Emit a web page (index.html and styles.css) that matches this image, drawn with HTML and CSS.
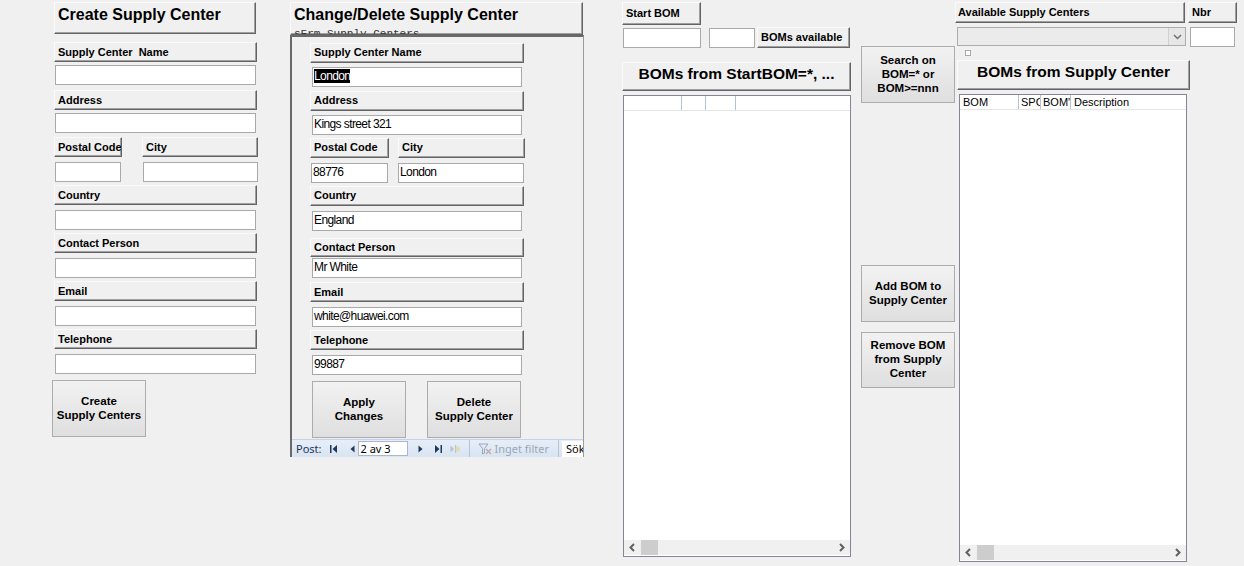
FILE: index.html
```html
<!DOCTYPE html>
<html>
<head>
<meta charset="utf-8">
<link rel="stylesheet" href="styles.css">
</head>
<body>
<div class="page">

  <!-- Column 1: create -->
  <div class="col1">
    <div class="raised title">Create Supply Center</div>
    <div class="raised lbl c1w mt8">Supply Center&nbsp; Name</div>
    <div class="inp c1i mt3"></div>
    <div class="raised lbl c1w mt5">Address</div>
    <div class="inp c1i mt3"></div>
    <div class="pair mt4">
      <div class="raised lbl postal1">Postal Code</div>
      <div class="raised lbl city1">City</div>
    </div>
    <div class="pair mt5">
      <div class="inp postal1i"></div>
      <div class="inp city1i"></div>
    </div>
    <div class="raised lbl c1w mt3">Country</div>
    <div class="inp c1i mt5"></div>
    <div class="raised lbl c1w mt3">Contact Person</div>
    <div class="inp c1i mt5"></div>
    <div class="raised lbl c1w mt3">Email</div>
    <div class="inp c1i mt5"></div>
    <div class="raised lbl c1w mt3">Telephone</div>
    <div class="inp c1i mt5"></div>
    <button class="btn create mt6">Create<br>Supply Centers</button>
  </div>

  <!-- Column 2: change/delete -->
  <div class="col2">
    <div class="raised title title2">Change/Delete Supply Center<span class="sfrm">sFrm Supply Centers</span></div>
    <div class="subform">
      <div class="raised lbl c2w">Supply Center Name</div>
      <div class="inp c2i mt4"><span class="sel">London</span></div>
      <div class="raised lbl c2w mt4">Address</div>
      <div class="inp c2i mt4">Kings street 321</div>
      <div class="pair mt3">
        <div class="raised lbl postal2">Postal Code</div>
        <div class="raised lbl city2">City</div>
      </div>
      <div class="pair mt5">
        <div class="inp postal2i">88776</div>
        <div class="inp city2i">London</div>
      </div>
      <div class="raised lbl c2w mt3">Country</div>
      <div class="inp c2i mt5">England</div>
      <div class="raised lbl c2w mt7">Contact Person</div>
      <div class="inp c2i mt1">Mr White</div>
      <div class="raised lbl c2w mt4">Email</div>
      <div class="inp c2i mt5">white@huawei.com</div>
      <div class="raised lbl c2w mt3">Telephone</div>
      <div class="inp c2i mt5">99887</div>
      <div class="pair mt6 btnrow">
        <button class="btn apply">Apply<br>Changes</button>
        <button class="btn delete">Delete<br>Supply Center</button>
      </div>
      <div class="navbar">
        <span class="navlbl">Post:</span>
        <svg class="ico first" width="8" height="8" viewBox="0 0 8 8"><rect x="0" y="0" width="1.5" height="8" fill="#1e395b"/><path d="M7 0 L2.5 4 L7 8 Z" fill="#1e395b"/></svg>
        <svg class="ico prev" width="5" height="8" viewBox="0 0 5 8"><path d="M4.5 0.5 L0.5 4 L4.5 7.5 Z" fill="#1e395b"/></svg>
        <span class="recbox">2 av 3</span>
        <svg class="ico next" width="5" height="8" viewBox="0 0 5 8"><path d="M0.5 0.5 L4.5 4 L0.5 7.5 Z" fill="#1e395b"/></svg>
        <svg class="ico last" width="8" height="8" viewBox="0 0 8 8"><path d="M1 0 L5.5 4 L1 8 Z" fill="#1e395b"/><rect x="6.5" y="0" width="1.5" height="8" fill="#1e395b"/></svg>
        <svg class="ico newrec" width="10" height="8" viewBox="0 0 10 8"><path d="M0.5 0.5 L4 4 L0.5 7.5 Z" fill="#b8c4d4"/><rect x="5" y="0" width="1.2" height="8" fill="#b8c4d4"/><path d="M8 1 L8 7 M5.5 4 L10 4 M6.3 2 L9.7 6 M9.7 2 L6.3 6" stroke="#e8d89a" stroke-width="1"/></svg>
        <span class="navsep"></span>
        <svg class="ico filter" width="14" height="12" viewBox="0 0 14 12"><path d="M1 1 L10 1 L6.5 5.5 L6.5 10 L4.5 11 L4.5 5.5 Z" fill="none" stroke="#9aa7b8" stroke-width="1"/><path d="M8 6 L13 11 M13 6 L8 11" stroke="#b9a9a9" stroke-width="1.2"/></svg>
        <span class="nofilter">Inget filter</span>
        <span class="navsep"></span>
        <span class="search">Sök</span>
      </div>
    </div>
  </div>

  <!-- Column 3: BOM list -->
  <div class="col3">
    <div class="raised lbl startbom">Start BOM</div>
    <div class="pair boms-row">
      <div class="inp bomin1"></div>
      <div class="inp bomin2"></div>
      <div class="raised lbl avail">BOMs available</div>
    </div>
    <div class="raised bigtitle bt1">BOMs from StartBOM=*, ...</div>
    <div class="list list1">
      <div class="lhead">
        <span class="hc hc1"></span><span class="hc hc2"></span><span class="hc hc3"></span><span class="hc hcrest"></span>
      </div>
      <div class="lbody"></div>
      <div class="hscroll">
        <svg class="arrow" width="17" height="15" viewBox="0 0 17 15"><path d="M10 4 L6.5 7.5 L10 11" fill="none" stroke="#606060" stroke-width="2"/></svg>
        <span class="thumb"></span>
        <span class="track"></span>
        <svg class="arrow" width="17" height="15" viewBox="0 0 17 15"><path d="M7 4 L10.5 7.5 L7 11" fill="none" stroke="#606060" stroke-width="2"/></svg>
      </div>
    </div>
  </div>

  <!-- Column 4: action buttons -->
  <div class="col4">
    <button class="btn side search-btn">Search on<br>BOM=* or<br>BOM&gt;=nnn</button>
    <button class="btn side add-btn">Add BOM to<br>Supply Center</button>
    <button class="btn side rem-btn">Remove BOM<br>from Supply<br>Center</button>
  </div>

  <!-- Column 5: supply center BOMs -->
  <div class="col5">
    <div class="pair">
      <div class="raised lbl availsc">Available Supply Centers</div>
      <div class="raised lbl nbr">Nbr</div>
    </div>
    <div class="pair combo-row">
      <div class="combo">
        <span class="combotext"></span>
        <span class="dropbtn"><svg width="9" height="6" viewBox="0 0 9 6"><path d="M1 1 L4.5 4.5 L8 1" fill="none" stroke="#707070" stroke-width="1.5"/></svg></span>
      </div>
      <div class="inp nbrin"></div>
    </div>
    <span class="chk"></span>
    <div class="raised bigtitle bt2">BOMs from Supply Center</div>
    <div class="list list2">
      <div class="lhead">
        <span class="hc hcb1">BOM</span><span class="hc hcb2">SPC</span><span class="hc hcb3">BOM'</span><span class="hc hcrest">Description</span>
      </div>
      <div class="lbody"></div>
      <div class="hscroll">
        <svg class="arrow" width="17" height="15" viewBox="0 0 17 15"><path d="M10 4 L6.5 7.5 L10 11" fill="none" stroke="#606060" stroke-width="2"/></svg>
        <span class="thumb"></span>
        <span class="track"></span>
        <svg class="arrow" width="17" height="15" viewBox="0 0 17 15"><path d="M7 4 L10.5 7.5 L7 11" fill="none" stroke="#606060" stroke-width="2"/></svg>
      </div>
    </div>
  </div>

</div>
</body>
</html>
```

FILE: styles.css
```css
* { box-sizing: border-box; }

body {
  margin: 0;
  width: 1244px;
  height: 566px;
  overflow: hidden;
  background: #f0f0f0;
  font-family: "Liberation Sans", Arial, sans-serif;
  color: #000;
}

.page {
  display: flex;
  align-items: flex-start;
}

.pair { display: flex; align-items: flex-start; }

/* spacing helpers */
.mt1 { margin-top: 1px; }
.mt3 { margin-top: 3px; }
.mt4 { margin-top: 4px; }
.mt5 { margin-top: 5px; }
.mt6 { margin-top: 6px; }
.mt7 { margin-top: 7px; }
.mt8 { margin-top: 8px; }

/* raised Access-style label / button */
.raised {
  background: #f0f0f0;
  border: 1px solid;
  border-color: #fafafa #646464 #646464 #fafafa;
  box-shadow: inset -1px -1px 0 #a0a0a0;
  white-space: nowrap;
  overflow: hidden;
}

.lbl {
  height: 20px;
  display: flex;
  align-items: center;
  padding-left: 3px;
  padding-bottom: 1px;
  font-size: 11px;
  font-weight: bold;
}

.title {
  height: 32px;
  margin-top: 2px;
  padding: 3px 0 0 3px;
  font-size: 16px;
  font-weight: bold;
}

.bigtitle {
  display: flex;
  align-items: center;
  justify-content: center;
  padding-bottom: 6px;
  font-size: 15.5px;
  font-weight: bold;
}

/* inputs */
.inp {
  height: 20px;
  background: #fff;
  border: 1px solid #a9a9a9;
  font-size: 12px;
  letter-spacing: -0.6px;
  line-height: 17px;
  padding-left: 1px;
  white-space: nowrap;
  overflow: hidden;
}

.sel {
  background: #000;
  color: #fff;
}

/* flat Win7 buttons */
.btn {
  display: block;
  border: 1px solid #acacac;
  background: linear-gradient(#f2f2f2, #e8e8e8 50%, #dfdfdf);
  font-family: "Liberation Sans", Arial, sans-serif;
  font-size: 11.5px;
  font-weight: bold;
  line-height: 14px;
  color: #000;
  text-align: center;
  padding: 0 0 2px;
}

/* ---------- column 1 ---------- */
.col1 {
  margin-left: 52px;
  width: 206px;
  display: flex;
  flex-direction: column;
  align-items: flex-start;
}
.col1 .title { margin-left: 2px; width: 202px; }
.c1w { margin-left: 2px; width: 203px; }
.c1i { margin-left: 3px; width: 201px; }
.postal1 { margin-left: 2px; width: 68px; }
.city1 { margin-left: 20px; width: 116px; }
.postal1i { margin-left: 3px; width: 66px; }
.city1i { margin-left: 22px; width: 115px; }
.create { width: 94px; height: 57px; }

/* ---------- column 2 ---------- */
.col2 {
  margin-left: 32px;
  width: 295px;
  display: flex;
  flex-direction: column;
}
.title2 {
  position: relative;
  width: 293px;
  height: 33px;
}
.sfrm {
  position: absolute;
  left: 3px;
  top: 25px;
  font-family: "Liberation Mono", "Courier New", monospace;
  font-weight: normal;
  font-size: 11px;
  color: #333;
}
.subform {
  width: 294px;
  height: 422px;
  border-left: 2px solid #696969;
  border-top: 2px solid #696969;
  border-right: 1px solid #9a9a9a;
  padding: 6px 0 0 18px;
  display: flex;
  flex-direction: column;
  align-items: flex-start;
  overflow: hidden;
}
.c2w { width: 214px; }
.c2i { margin-left: 2px; width: 210px; }
.postal2 { width: 79px; }
.city2 { margin-left: 9px; width: 127px; }
.postal2i { margin-left: 1px; width: 77px; }
.city2i { margin-left: 10px; width: 126px; }
.btnrow { gap: 21px; margin-left: 2px; }
.apply, .delete { width: 94px; height: 57px; }

.navbar {
  margin: 1px 0 0 -18px;
  width: 300px;
  height: 18px;
  background: linear-gradient(#e6eef8, #d9e4f2);
  border-top: 1px solid #c5d3e6;
  display: flex;
  align-items: center;
  font-family: "Noto Sans", "Open Sans", sans-serif;
  font-size: 11px;
  color: #1e395b;
  white-space: nowrap;
}
.navlbl { margin-left: 4px; }
.ico { flex: none; }
.first { margin-left: 8px; }
.prev { margin-left: 12px; }
.recbox {
  margin-left: 3px;
  width: 50px;
  height: 15px;
  background: #fff;
  border: 1px solid #a7b8d0;
  color: #000;
  line-height: 13px;
  padding-left: 2px;
}
.next { margin-left: 10px; }
.last { margin-left: 11px; }
.newrec { margin-left: 8px; }
.navsep {
  width: 1px;
  height: 18px;
  background: #b3c4da;
  margin-left: 9px;
}
.filter { margin-left: 8px; }
.nofilter { margin-left: 3px; color: #9ca7b5; }
.search {
  margin-left: 3px;
  height: 16px;
  padding: 0 4px;
  background: #fff;
  color: #000;
  line-height: 16px;
}

/* ---------- column 3 ---------- */
.col3 {
  margin-left: 37px;
  width: 229px;
  display: flex;
  flex-direction: column;
  align-items: flex-start;
}
.startbom { margin-top: 2px; width: 79px; height: 23px; padding-left: 3px; }
.boms-row { margin-top: 2px; }
.bomin1 { margin-top: 1px; margin-left: 1px; width: 78px; }
.bomin2 { margin-top: 1px; margin-left: 8px; width: 46px; }
.avail { margin-left: 2px; width: 93px; height: 21px; padding-left: 3px; }
.bt1 { margin-top: 14px; width: 229px; height: 29px; }

.list {
  background: #fff;
  border: 1px solid #828790;
  display: flex;
  flex-direction: column;
}
.list1 { margin-top: 4px; margin-left: 1px; width: 228px; height: 462px; }
.lhead {
  display: flex;
  height: 15px;
  border-bottom: 1px solid #e5e5e5;
  font-size: 11px;
  line-height: 14px;
  flex: none;
}
.hc {
  border-right: 1px solid #b4c2d4;
  padding-left: 3px;
  overflow: hidden;
  white-space: nowrap;
  flex: none;
}
.hcrest { border-right: none; flex: 1; }
.hc1 { width: 58px; }
.hc2 { width: 24px; }
.hc3 { width: 30px; }
.hcb1 { width: 59px; }
.hcb2 { width: 22px; padding-left: 2px; }
.hcb3 { width: 30px; padding-left: 2px; }
.lbody { flex: 1; }
.hscroll {
  flex: none;
  height: 15px;
  margin-bottom: 1px;
  background: #f0f0f0;
  display: flex;
  align-items: center;
}
.arrow { flex: none; }
.thumb {
  width: 17px;
  height: 15px;
  background: #cdcdcd;
  flex: none;
}
.track { flex: 1; }

/* ---------- column 4 ---------- */
.col4 {
  margin-left: 10px;
  width: 94px;
  display: flex;
  flex-direction: column;
}
.side { width: 94px; }
.search-btn { margin-top: 46px; height: 57px; }
.add-btn { margin-top: 162px; height: 57px; }
.rem-btn { margin-top: 10px; height: 56px; }

/* ---------- column 5 ---------- */
.col5 {
  width: 282px;
  display: flex;
  flex-direction: column;
  align-items: flex-start;
}
.availsc { margin-top: 2px; width: 230px; height: 21px; padding-left: 2px; }
.nbr { margin-top: 2px; margin-left: 3px; width: 49px; height: 21px; padding-left: 3px; }
.combo-row { margin-top: 4px; }
.combo {
  margin-left: 2px;
  width: 229px;
  height: 19px;
  background: #ebebeb;
  border: 1px solid #acacac;
  display: flex;
  justify-content: flex-end;
}
.dropbtn {
  width: 17px;
  height: 17px;
  border-left: 1px solid #d0d0d0;
  display: flex;
  align-items: center;
  justify-content: center;
  background: #e6e6e6;
}
.nbrin { margin-left: 4px; width: 45px; }
.chk {
  margin: 3px 0 0 10px;
  width: 6px;
  height: 6px;
  border: 1px solid #a8a8a8;
  background: #fff;
}
.bt2 { margin-top: 4px; margin-left: 2px; width: 233px; height: 30px; }
.list2 { margin-top: 4px; margin-left: 4px; width: 228px; height: 468px; }
.list2 .hscroll { margin-bottom: 1px; }
```
